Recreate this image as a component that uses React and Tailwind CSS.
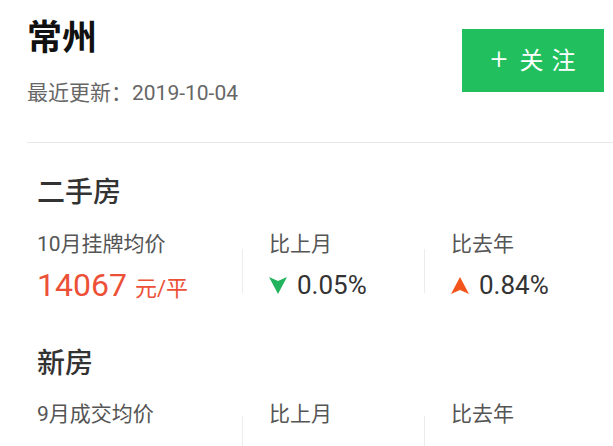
import React from 'react';

const font = { fontFamily: 'Roboto, "Noto Sans CJK SC", sans-serif' };

function Down() {
  return (
    <svg width="18" height="17" viewBox="0 0 18 17" className="mr-[10px]">
      <path d="M0 0 L9 4 L18 0 L9 17 Z" fill="#22b35e" />
    </svg>
  );
}

function Up() {
  return (
    <svg width="18" height="17" viewBox="0 0 18 17" className="mr-[10px]">
      <path d="M9 0 L18 17 L9 13 L0 17 Z" fill="#f2541c" />
    </svg>
  );
}

function Stat({ label, children, divider }) {
  return (
    <div className="flex flex-1 items-stretch">
      {divider && <div className="w-px h-[44px] self-center mt-[2px] bg-[#ececec]" />}
      <div className={`flex flex-col ${divider ? 'pl-[26px]' : ''}`}>
        <div className="text-[21px] leading-[28px] text-[#555]">{label}</div>
        {children}
      </div>
    </div>
  );
}

export default function App() {
  return (
    <div className="w-[613px] h-[446px] overflow-hidden bg-white" style={font}>
      {/* header */}
      <div className="flex justify-between pl-[27px] pr-[9px] pt-[15px] h-[142px]">
        <div>
          <h1 className="text-[35px] leading-[48px] font-bold text-[#111]">常州</h1>
          <div className="mt-[16px] text-[21px] leading-[28px] text-[#666]">最近更新：2019-10-04</div>
        </div>
        <button className="mt-[14px] w-[142px] h-[63px] bg-[#22bf5f] text-white text-[24px] flex items-center justify-center">
          <span className="font-light text-[30px] leading-none mr-[12px] mb-[3px]">+</span>
          <span className="tracking-[8px] mr-[-8px]">关注</span>
        </button>
      </div>
      <div className="ml-[27px] h-px bg-[#e8e8e8]" />

      {/* 二手房 */}
      <div className="pl-[37px] pt-[32px]">
        <h2 className="text-[28px] leading-[36px] font-medium text-[#333]">二手房</h2>
        <div className="flex mt-[19px]">
          <div className="w-[205px]">
            <Stat label="10月挂牌均价">
              <div className="mt-[9px] text-[#ec5138] leading-[36px]">
                <span className="text-[32px]">14067</span>
                <span className="text-[22px] ml-[8px]">元/平</span>
              </div>
            </Stat>
          </div>
          <div className="w-[182px] flex">
            <Stat label="比上月" divider>
              <div className="mt-[9px] flex items-center text-[26px] leading-[36px] text-[#333]">
                <Down />0.05%
              </div>
            </Stat>
          </div>
          <div className="flex-1 flex">
            <Stat label="比去年" divider>
              <div className="mt-[9px] flex items-center text-[26px] leading-[36px] text-[#333]">
                <Up />0.84%
              </div>
            </Stat>
          </div>
        </div>
      </div>

      {/* 新房 */}
      <div className="pl-[37px] pt-[37px]">
        <h2 className="text-[28px] leading-[36px] font-medium text-[#333]">新房</h2>
        <div className="flex mt-[18px]">
          <div className="w-[205px]">
            <Stat label="9月成交均价">
              <div className="mt-[9px] h-[36px]" />
            </Stat>
          </div>
          <div className="w-[182px] flex">
            <Stat label="比上月" divider>
              <div className="mt-[9px] h-[36px]" />
            </Stat>
          </div>
          <div className="flex-1 flex">
            <Stat label="比去年" divider>
              <div className="mt-[9px] h-[36px]" />
            </Stat>
          </div>
        </div>
      </div>
    </div>
  );
}
